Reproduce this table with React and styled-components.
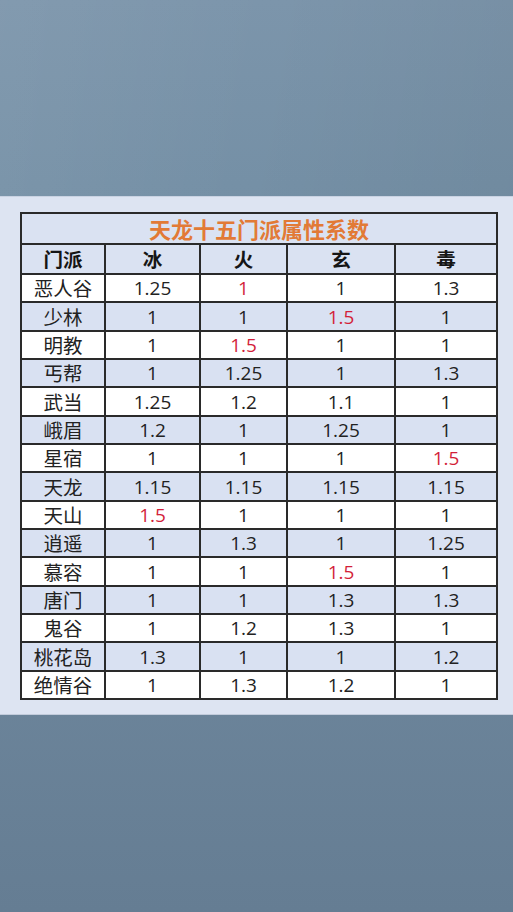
import React from "react";
import styled, { createGlobalStyle } from "styled-components";

const Global = createGlobalStyle`
  html, body { margin: 0; padding: 0; }
  body { font-family: "Open Sans", "Noto Sans CJK SC", sans-serif; }
`;

const Page = styled.div`
  width: 513px;
  height: 912px;
  display: flex;
  flex-direction: column;
  overflow: hidden;
  background: linear-gradient(180deg, #7c95ab 0%, #7590a6 20%, #6f889e 60%, #657d93 100%);
`;

const Spacer = styled.div`
  height: 196px;
  flex: none;
  background: linear-gradient(100deg, rgba(255,255,255,0.05) 0%, rgba(255,255,255,0) 50%, rgba(0,0,0,0.04) 100%);
`;

const Panel = styled.div`
  flex: none;
  height: 519px;
  box-sizing: border-box;
  padding: 15px 17px 0 20px;
  background: #dde4f2;
  border-top: 1px solid #c9d2e2;
  border-bottom: 1px solid #c2cbdb;
`;

const Table = styled.table`
  width: 476px;
  border-collapse: collapse;
  table-layout: fixed;
  border: 2px solid #2a2a2a;
`;

const TitleCell = styled.td`
  height: 29px;
  padding: 0;
  text-align: center;
  font-family: "Noto Sans CJK SC", sans-serif;
  font-weight: 700;
  font-size: 22px;
  line-height: 29px;
  color: #e27a36;
  background: #dae2f2;
  border: 2px solid #2a2a2a;
`;

const HeadCell = styled.th`
  height: 28px;
  padding: 0;
  text-align: center;
  font-family: "Noto Sans CJK SC", sans-serif;
  font-weight: 700;
  font-size: 19.5px;
  line-height: 28px;
  color: #151515;
  background: #dae2f2;
  border: 2px solid #2a2a2a;
`;

const Row = styled.tr`
  height: 28.35px;
  background: ${(p) => (p.$alt ? "#d9e1f2" : "#ffffff")};
`;

const NameCell = styled.td`
  padding: 0;
  text-align: center;
  font-family: "Noto Sans CJK SC", sans-serif;
  font-size: 19.5px;
  line-height: 26px;
  color: #222;
  border: 2px solid #2a2a2a;
`;

const ValueCell = styled.td`
  padding: 0;
  text-align: center;
  font-family: "Open Sans", "Noto Sans CJK SC", sans-serif;
  font-size: 19px;
  line-height: 26px;
  color: ${(p) => (p.$hot ? "#d31f3a" : "#222")};
  border: 2px solid #2a2a2a;
`;

const cols = [84, 95, 87, 108, 102];

const rows = [
  ["恶人谷", "1.25", "1", "1", "1.3", 2],
  ["少林", "1", "1", "1.5", "1", 3],
  ["明教", "1", "1.5", "1", "1", 2],
  ["丐帮", "1", "1.25", "1", "1.3", 0],
  ["武当", "1.25", "1.2", "1.1", "1", 0],
  ["峨眉", "1.2", "1", "1.25", "1", 0],
  ["星宿", "1", "1", "1", "1.5", 4],
  ["天龙", "1.15", "1.15", "1.15", "1.15", 0],
  ["天山", "1.5", "1", "1", "1", 1],
  ["逍遥", "1", "1.3", "1", "1.25", 0],
  ["慕容", "1", "1", "1.5", "1", 3],
  ["唐门", "1", "1", "1.3", "1.3", 0],
  ["鬼谷", "1", "1.2", "1.3", "1", 0],
  ["桃花岛", "1.3", "1", "1", "1.2", 0],
  ["绝情谷", "1", "1.3", "1.2", "1", 0],
];

export default function App() {
  return (
    <>
      <Global />
      <Page>
        <Spacer />
        <Panel>
          <Table>
            <colgroup>
              {cols.map((w, i) => (
                <col key={i} style={{ width: w }} />
              ))}
            </colgroup>
            <tbody>
              <tr>
                <TitleCell colSpan={5}>天龙十五门派属性系数</TitleCell>
              </tr>
              <tr>
                <HeadCell>门派</HeadCell>
                <HeadCell>冰</HeadCell>
                <HeadCell>火</HeadCell>
                <HeadCell>玄</HeadCell>
                <HeadCell>毒</HeadCell>
              </tr>
              {rows.map((r, i) => (
                <Row key={r[0]} $alt={i % 2 === 1}>
                  <NameCell>{r[0]}</NameCell>
                  {[1, 2, 3, 4].map((c) => (
                    <ValueCell key={c} $hot={r[5] === c}>
                      {r[c]}
                    </ValueCell>
                  ))}
                </Row>
              ))}
            </tbody>
          </Table>
        </Panel>
      </Page>
    </>
  );
}
